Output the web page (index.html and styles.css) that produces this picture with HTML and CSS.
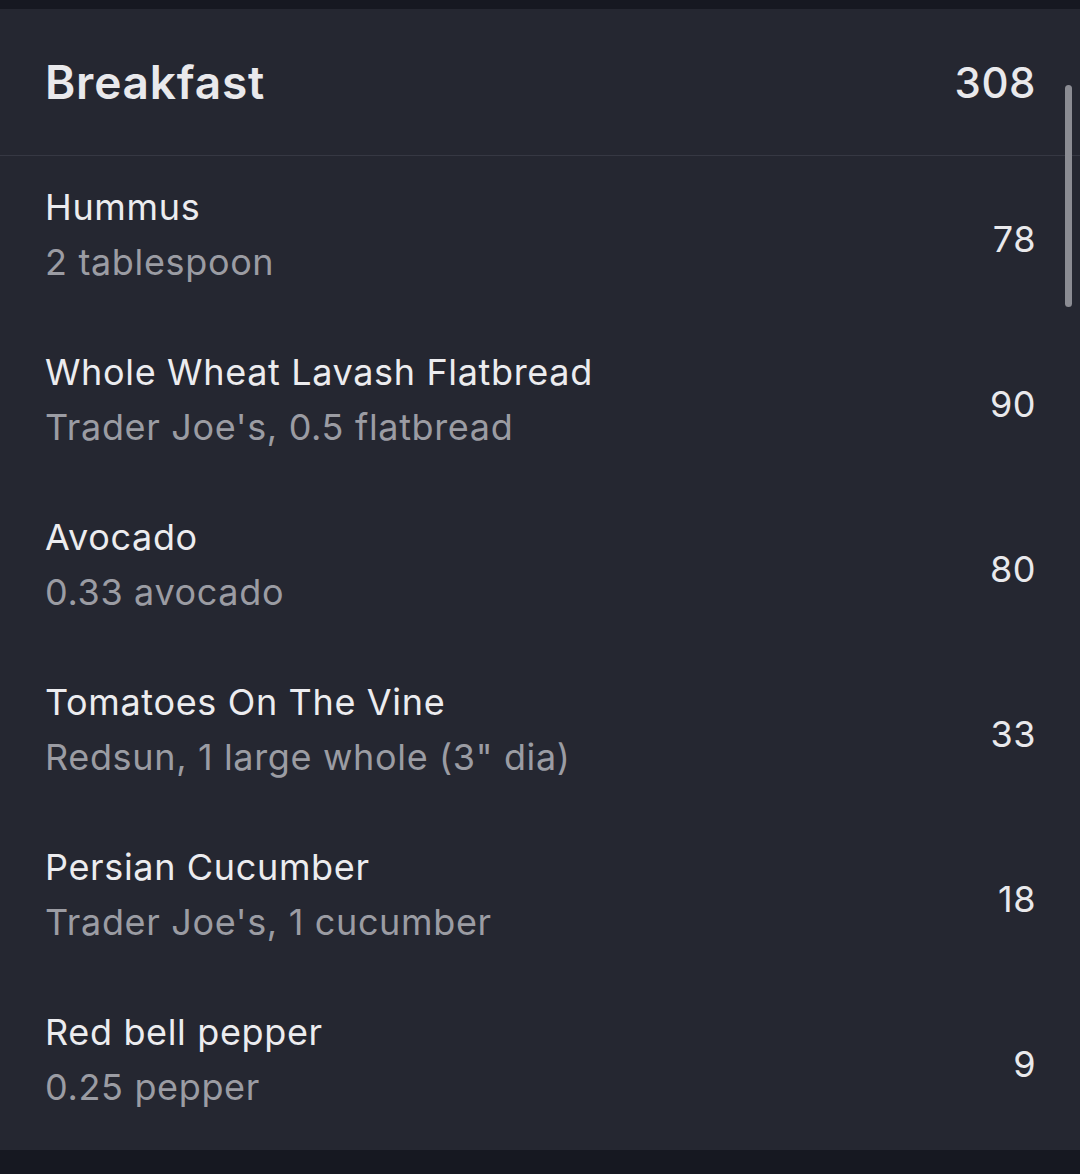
FILE: index.html
```html
<!DOCTYPE html>
<html lang="en">
<head>
    <meta charset="UTF-8">
    <meta name="viewport" content="width=device-width, initial-scale=1.0">
    <title>Breakfast</title>
    <link rel="stylesheet" href="styles.css">
</head>
<body>
    <div class="meal">
        <div class="meal-header">
            <span class="meal-title">Breakfast</span>
            <span class="meal-total">308</span>
        </div>
        <div class="food-list">
            <div class="food">
                <div class="food-info">
                    <div class="food-name">Hummus</div>
                    <div class="food-detail">2 tablespoon</div>
                </div>
                <div class="food-cal">78</div>
            </div>
            <div class="food">
                <div class="food-info">
                    <div class="food-name">Whole Wheat Lavash Flatbread</div>
                    <div class="food-detail">Trader Joe's, 0.5 flatbread</div>
                </div>
                <div class="food-cal">90</div>
            </div>
            <div class="food">
                <div class="food-info">
                    <div class="food-name">Avocado</div>
                    <div class="food-detail">0.33 avocado</div>
                </div>
                <div class="food-cal">80</div>
            </div>
            <div class="food">
                <div class="food-info">
                    <div class="food-name">Tomatoes On The Vine</div>
                    <div class="food-detail">Redsun, 1 large whole (3" dia)</div>
                </div>
                <div class="food-cal">33</div>
            </div>
            <div class="food">
                <div class="food-info">
                    <div class="food-name">Persian Cucumber</div>
                    <div class="food-detail">Trader Joe's, 1 cucumber</div>
                </div>
                <div class="food-cal">18</div>
            </div>
            <div class="food">
                <div class="food-info">
                    <div class="food-name">Red bell pepper</div>
                    <div class="food-detail">0.25 pepper</div>
                </div>
                <div class="food-cal">9</div>
            </div>
        </div>
        <div class="scrollbar"></div>
    </div>
</body>
</html>
```

FILE: styles.css
```css
html, body {
    margin: 0;
    padding: 0;
}
body {
    font-family: Inter, "Noto Sans", Arial, sans-serif;
    background-color: #161821;
    color: #e9e9ec;
    padding: 9px 0 24px;
}
.meal {
    position: relative;
    background-color: #252731;
    height: 1141px;
    overflow: hidden;
}
.meal-header {
    display: flex;
    justify-content: space-between;
    align-items: center;
    height: 146px;
    padding: 0 44px 0 45px;
    border-bottom: 1px solid #363843;
}
.meal-title {
    font-size: 46px;
    font-weight: 600;
    letter-spacing: 0.8px;
}
.meal-total {
    font-size: 42px;
    font-weight: 500;
    letter-spacing: 0.5px;
}
.food {
    display: flex;
    justify-content: space-between;
    align-items: center;
    height: 165px;
    padding: 0 44px 0 45px;
}
.food-info {
    display: flex;
    flex-direction: column;
    margin-top: -8px;
    letter-spacing: 0.65px;
}
.food-name {
    font-size: 36px;
    line-height: 55px;
    color: #ececef;
}
.food-detail {
    font-size: 36px;
    line-height: 55px;
    color: #9b9ca3;
}
.food-cal {
    font-size: 36px;
    letter-spacing: 0.5px;
    color: #e9e9ec;
}
.scrollbar {
    position: absolute;
    top: 76px;
    right: 8px;
    width: 7px;
    height: 222px;
    border-radius: 4px;
    background-color: #8b8c93;
}
```
